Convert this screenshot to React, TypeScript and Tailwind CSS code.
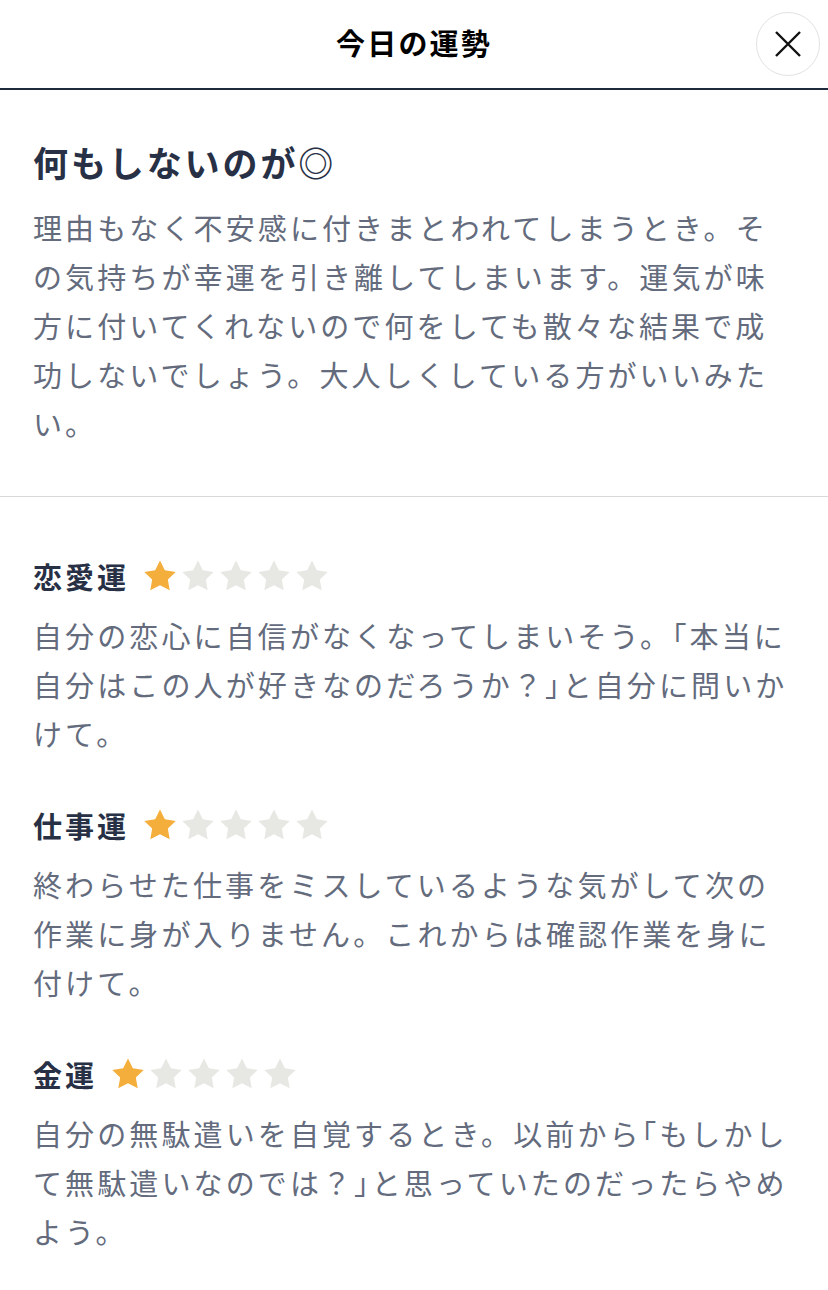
import React from "react";

interface Fortune {
  label: string;
  score: number;
  lines: string[];
}

const fortunes: Fortune[] = [
  {
    label: "恋愛運",
    score: 1,
    lines: [
      "自分の恋心に自信がなくなってしまいそう。「本当に",
      "自分はこの人が好きなのだろうか？」と自分に問いか",
      "けて。",
    ],
  },
  {
    label: "仕事運",
    score: 1,
    lines: [
      "終わらせた仕事をミスしているような気がして次の",
      "作業に身が入りません。これからは確認作業を身に",
      "付けて。",
    ],
  },
  {
    label: "金運",
    score: 1,
    lines: [
      "自分の無駄遣いを自覚するとき。以前から「もしかし",
      "て無駄遣いなのでは？」と思っていたのだったらやめ",
      "よう。",
    ],
  },
];

const summary = [
  "理由もなく不安感に付きまとわれてしまうとき。そ",
  "の気持ちが幸運を引き離してしまいます。運気が味",
  "方に付いてくれないので何をしても散々な結果で成",
  "功しないでしょう。大人しくしている方がいいみた",
  "い。",
];

const Star = ({ on }: { on: boolean }) => (
  <svg viewBox="0 0 24 24" className="w-[38px] h-[38px] shrink-0">
    <path
      d="M12 2.2l3.05 6.2 6.85 1-4.95 4.82 1.17 6.8L12 17.8l-6.12 3.22 1.17-6.8L2.1 9.4l6.85-1z"
      fill={on ? "#f4ae3b" : "#e7e7e3"}
    />
  </svg>
);

// brackets get half width, like the original's proportional punctuation
const renderLine = (line: string) => {
  const chars = Array.from(line);
  return chars.map((c, i) => {
    if ((c === "「" || c === "」") && chars[i - 1] !== "。") {
      return (
        <span key={i} className="[font-feature-settings:'halt']">
          {c}
        </span>
      );
    }
    return c;
  });
};

const Lines = ({ lines }: { lines: string[] }) => (
  <p className="text-[29px] leading-[49px] tracking-[3.1px] text-[#636b7d] whitespace-nowrap">
    {lines.map((line, i) => (
      <React.Fragment key={i}>
        {renderLine(line)}
        {i < lines.length - 1 && <br />}
      </React.Fragment>
    ))}
  </p>
);

const App = () => {
  return (
    <div className="w-[828px] min-h-[1290px] bg-white font-['Noto_Sans_CJK_JP','Noto_Sans',sans-serif]">
      {/* header */}
      <header className="relative h-[90px] border-b-2 border-[#1f2a3d] flex items-center justify-center">
        <h1 className="text-[29px] font-bold text-black tracking-[2.2px] pb-[2px]">今日の運勢</h1>
        <button className="absolute right-[8px] top-[12px] w-[64px] h-[64px] rounded-full border border-[#e2e2e2] flex items-center justify-center">
          <svg viewBox="0 0 26 26" className="w-[26px] h-[26px]">
            <path d="M1 1L25 25M25 1L1 25" stroke="#111" strokeWidth="2.4" />
          </svg>
        </button>
      </header>

      {/* summary */}
      <section className="px-[33px] pt-[50px] pb-[48px] border-b border-[#d9d9d9]">
        <h2 className="text-[35px] leading-[44px] font-bold text-[#283045] tracking-[2.9px]">
          何もしないのが◎
        </h2>
        <div className="mt-[19px]">
          <Lines lines={summary} />
        </div>
      </section>

      {/* details */}
      <section className="px-[33px] pt-[60px] flex flex-col gap-[48px]">
        {fortunes.map((f) => (
          <div key={f.label}>
            <div className="flex items-center h-[40px]">
              <h3 className="text-[29px] font-bold text-[#283045] tracking-[3px]">{f.label}</h3>
              <div className="flex ml-[12px] -mt-[2px]">
                {[0, 1, 2, 3, 4].map((i) => (
                  <Star key={i} on={i < f.score} />
                ))}
              </div>
            </div>
            <div className="mt-[14px]">
              <Lines lines={f.lines} />
            </div>
          </div>
        ))}
      </section>
    </div>
  );
};

export default App;
